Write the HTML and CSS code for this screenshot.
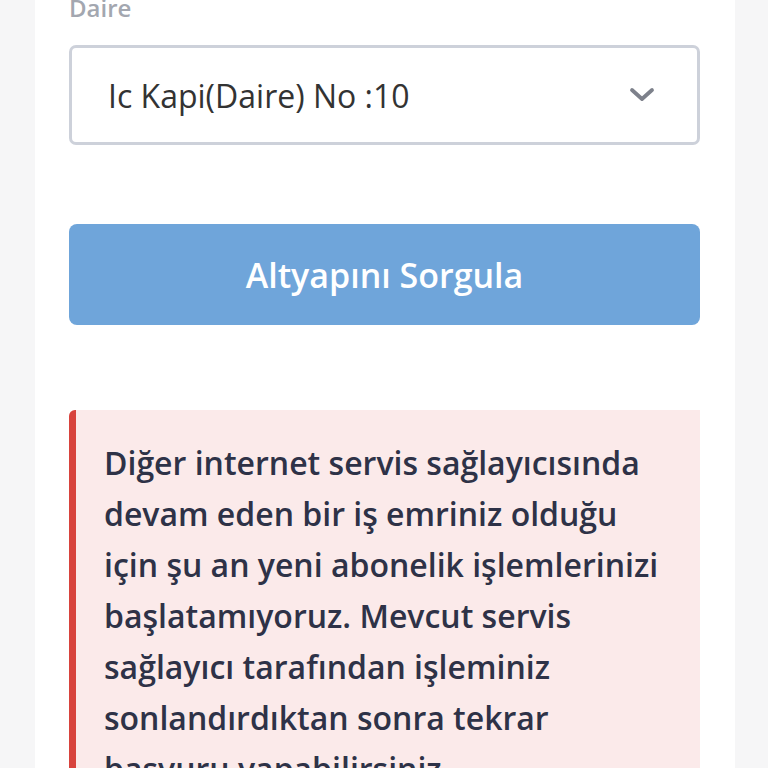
FILE: index.html
```html
<!DOCTYPE html>
<html lang="tr">

<head>
    <meta charset="UTF-8">
    <meta name="viewport" content="width=device-width, initial-scale=1.0">
    <title>Altyapı Sorgulama</title>
    <link rel="stylesheet" href="styles.css">
</head>

<body>
    <div class="card">
        <label class="label">Daire</label>
        <div class="select">
            <span class="select_text">Ic Kapi(Daire) No :10</span>
            <svg class="chevron" width="26" height="16" viewBox="0 0 26 16">
                <path d="M3 3 L13 12 L23 3" fill="none" stroke="#7d818b" stroke-width="3.8" stroke-linecap="round" stroke-linejoin="round"/>
            </svg>
        </div>
        <button class="query">Altyapını Sorgula</button>
        <div class="alert">
            Diğer internet servis sağlayıcısında devam eden bir iş emriniz olduğu için şu an yeni abonelik işlemlerinizi başlatamıyoruz. Mevcut servis sağlayıcı tarafından işleminiz sonlandırdıktan sonra tekrar başvuru yapabilirsiniz.
        </div>
    </div>
</body>

</html>
```

FILE: styles.css
```css
* {
    margin: 0;
    padding: 0;
    box-sizing: border-box;
}

body {
    background-color: #f6f6f7;
    font-family: "Open Sans", "Noto Sans", sans-serif;
    overflow: hidden;
}

.card {
    width: 700px;
    margin: -8px 0 0 35px;
    background-color: #fff;
    padding: 0 35px 40px 34px;
    display: flex;
    flex-direction: column;
    min-height: 900px;
}

.label {
    display: block;
    font-size: 24px;
    line-height: 32px;
    font-weight: 600;
    color: #a3a7b0;
}

.select {
    margin-top: 21px;
    height: 100px;
    border: 3px solid #cdd1da;
    border-radius: 7px;
    display: flex;
    align-items: center;
    justify-content: space-between;
    padding: 0 42px 0 36px;
}

.select_text {
    font-size: 32px;
    color: #333;
}

.query {
    margin-top: 79px;
    height: 101px;
    width: 100%;
    border: none;
    border-radius: 8px;
    background-color: #6fa5da;
    color: #fff;
    font-family: "Open Sans", "Noto Sans", sans-serif;
    font-size: 34px;
    font-weight: 600;
}

.alert {
    margin-top: 85px;
    background-color: #fbeaea;
    border-left: 7px solid #d8433d;
    border-radius: 6px 0 0 0;
    padding: 27px 40px 20px 28px;
    font-size: 32px;
    line-height: 51px;
    font-weight: 600;
    color: #2e3247;
}
```
